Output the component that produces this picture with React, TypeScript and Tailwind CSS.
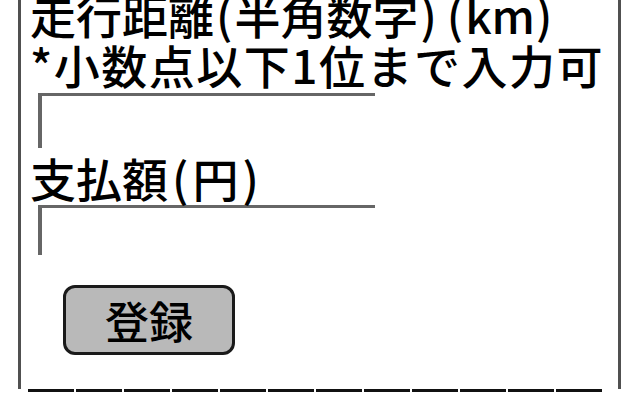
const font = '"Noto Sans CJK JP", "Noto Sans", sans-serif';

function Field({ height }: { height: string }) {
  return (
    <div
      className={`ml-[8px] w-[337px] ${height} border-t-[3px] border-l-[4px] border-[#666666] bg-white`}
    />
  );
}

function P({ children, pad }: { children: string; pad: string }) {
  return <span className={pad}>{children}</span>;
}

export default function App() {
  const dashes = Array.from({ length: 12 });

  return (
    <div
      className="h-[400px] w-[640px] overflow-hidden bg-white text-black"
      style={{ fontFamily: font }}
    >
      <div className="ml-[18px] h-full w-[603px] border-x-[3px] border-[#505050] pl-[9px]">
        <div className="-mt-[11px] text-[46px] font-medium leading-[50px]">
          <div className="whitespace-nowrap">
            走行距離<P pad="px-[2px]">(</P>半角数字<P pad="pl-[2px] pr-[7px]">)</P>
            <P pad="pl-[3px] pr-[2px]">(</P>km<P pad="pl-[1px]">)</P>
          </div>
          <div className="whitespace-nowrap tracking-[1.5px]">*小数点以下1位まで入力可</div>
        </div>

        <div className="mt-[4px]">
          <Field height="h-[55px]" />
        </div>

        <div className="mt-[4px] whitespace-nowrap text-[46px] font-medium leading-[50px]">
          支払額<P pad="px-[4px]">(</P>円<P pad="px-[4px]">)</P>
        </div>

        <div className="mt-[3px]">
          <Field height="h-[50px]" />
        </div>

        <button className="ml-[33px] mt-[30px] flex h-[70px] w-[172px] items-center justify-center rounded-[12px] border-[3px] border-[#1a1a1a] bg-[#b9b9b9] text-[44px] font-medium leading-none">
          登録
        </button>

        <div className="-ml-[2px] mt-[34px] flex w-[574px] gap-[2px]">
          {dashes.map((_, i) => (
            <div key={i} className="h-[3px] flex-1 bg-[#111111]" />
          ))}
        </div>
      </div>
    </div>
  );
}
